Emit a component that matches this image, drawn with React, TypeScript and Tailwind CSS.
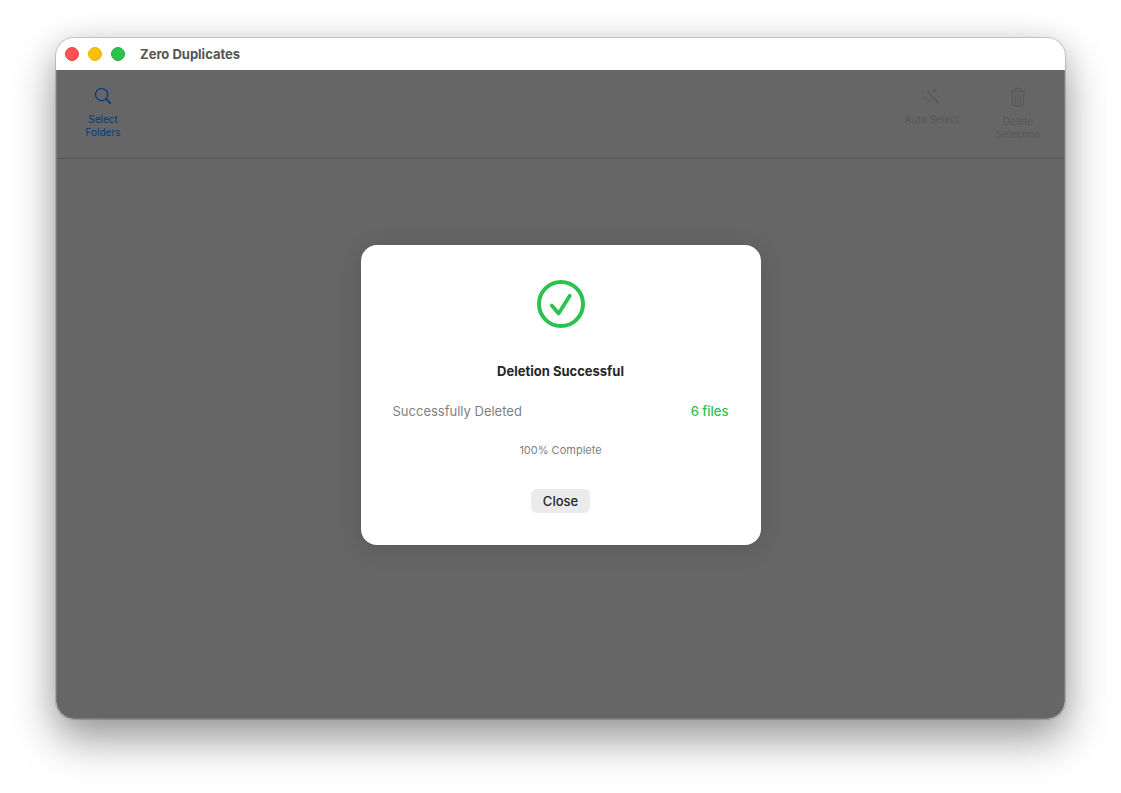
function SearchIcon() {
  return (
    <svg width="18" height="18" viewBox="0 0 18 18" fill="none" stroke="currentColor" strokeLinecap="round" aria-hidden="true">
      <circle cx="7.6" cy="7.6" r="6.1" strokeWidth="1.2" />
      <path d="M12.2 12.2L16.2 16.2" strokeWidth="1.7" />
    </svg>
  )
}

function WandIcon() {
  return (
    <svg width="18" height="18" viewBox="0 0 18 18" aria-hidden="true">
      <path d="M4.9 5L15.2 15.8" stroke="currentColor" strokeWidth="1.7" strokeLinecap="round" />
      <path d="M12 0.8L12.6 3L14.8 3.6L12.6 4.2L12 6.4L11.4 4.2L9.2 3.6L11.4 3Z" fill="currentColor" />
      <path d="M2.6 8.8L3.1 10.4L4.7 10.9L3.1 11.4L2.6 13L2.1 11.4L0.5 10.9L2.1 10.4Z" fill="currentColor" />
      <path d="M5.4 12.5L5.8 13.6L6.9 14L5.8 14.4L5.4 15.5L5 14.4L3.9 14L5 13.6Z" fill="currentColor" />
    </svg>
  )
}

function TrashIcon() {
  return (
    <svg width="18" height="20" viewBox="0 0 18 20" fill="none" stroke="currentColor" strokeWidth="1.2" strokeLinecap="round" strokeLinejoin="round" aria-hidden="true">
      <path d="M1.5 4.5H16.5" />
      <path d="M5.8 4.3V2.8C5.8 1.9 6.3 1.4 7.2 1.4H10.8C11.7 1.4 12.2 1.9 12.2 2.8V4.3" />
      <path d="M3.1 4.6L3.7 17C3.8 18.2 4.4 18.8 5.5 18.8H12.5C13.6 18.8 14.2 18.2 14.3 17L14.9 4.6" />
      <path d="M6.3 7L6.6 16.2M9 7V16.2M11.7 7L11.4 16.2" strokeWidth="1" />
    </svg>
  )
}

function CheckIcon() {
  return (
    <svg width="48" height="48" viewBox="0 0 48 48" fill="none" stroke="currentColor" strokeWidth="4" strokeLinecap="round" strokeLinejoin="round" aria-hidden="true">
      <circle cx="24" cy="24" r="22" />
      <path d="M14.8 25.6L21.6 33.4L32.8 15.8" strokeWidth="3.8" />
    </svg>
  )
}

export default function App() {
  return (
    <main className="flex min-h-screen flex-col bg-white px-14 pt-[38px] pb-[74px] font-['Inter','Liberation_Sans',sans-serif] text-[13px] leading-4">
      <section className="flex grow flex-col overflow-hidden rounded-[18px] bg-white shadow-[0_0_0_1px_rgba(0,0,0,0.16),0_20px_44px_rgba(0,0,0,0.4),0_0_28px_rgba(0,0,0,0.08)]">
        <header className="flex h-8 items-center gap-[9px] px-[9px]">
          <button aria-label="Close window" className="size-[14px] rounded-full border border-[#f23c42] bg-[#ff5257]" />
          <button aria-label="Minimize" className="size-[14px] rounded-full border border-[#efb400] bg-[#fdc00a]" />
          <button aria-label="Zoom" className="size-[14px] rounded-full border border-[#1fad3a] bg-[#2dc14f]" />
          <h1 className="pl-[6px] font-bold text-[#555555]">Zero Duplicates</h1>
        </header>

        <div className="relative flex grow flex-col rounded-b-[18px] border-x border-b border-[#7c7c7c] bg-[#666666]">
          <div className="flex h-[89px] items-start justify-between border-b border-[#595959] px-4 pt-[17px] text-[10px] leading-[13px]">
            <button className="flex w-[60px] flex-col items-center gap-2 text-[#003a78]">
              <SearchIcon />
              <span>Select<br />Folders</span>
            </button>
            <div className="flex items-start gap-[26px] text-[#585858]">
              <button disabled className="flex w-[60px] flex-col items-center gap-2 whitespace-nowrap">
                <WandIcon />
                <span>Auto Select</span>
              </button>
              <button disabled className="flex w-[60px] flex-col items-center gap-2">
                <TrashIcon />
                <span>Delete<br />Selection</span>
              </button>
            </div>
          </div>

          <div className="absolute inset-0 flex items-center justify-center pt-0.5">
            <div role="dialog" aria-labelledby="dialog-title" className="flex w-[400px] flex-col items-center rounded-2xl bg-white px-8 pt-[35px] pb-8 shadow-[0_4px_24px_rgba(0,0,0,0.14)]">
              <span className="text-[#2dc14f]"><CheckIcon /></span>
              <h2 id="dialog-title" className="mt-[35px] font-bold text-[#262626]">Deletion Successful</h2>
              <div className="mt-6 flex w-full justify-between">
                <span className="text-[#7f7f7f]">Successfully Deleted</span>
                <span className="font-medium text-[#2dc14f]">6 files</span>
              </div>
              <p className="mt-6 text-[11px] leading-[14px] text-[#7f7f7f]">100% Complete</p>
              <button className="mt-8 h-6 rounded-md bg-[#ebebeb] px-3 font-medium text-[#262626]">Close</button>
            </div>
          </div>
        </div>
      </section>
    </main>
  )
}
